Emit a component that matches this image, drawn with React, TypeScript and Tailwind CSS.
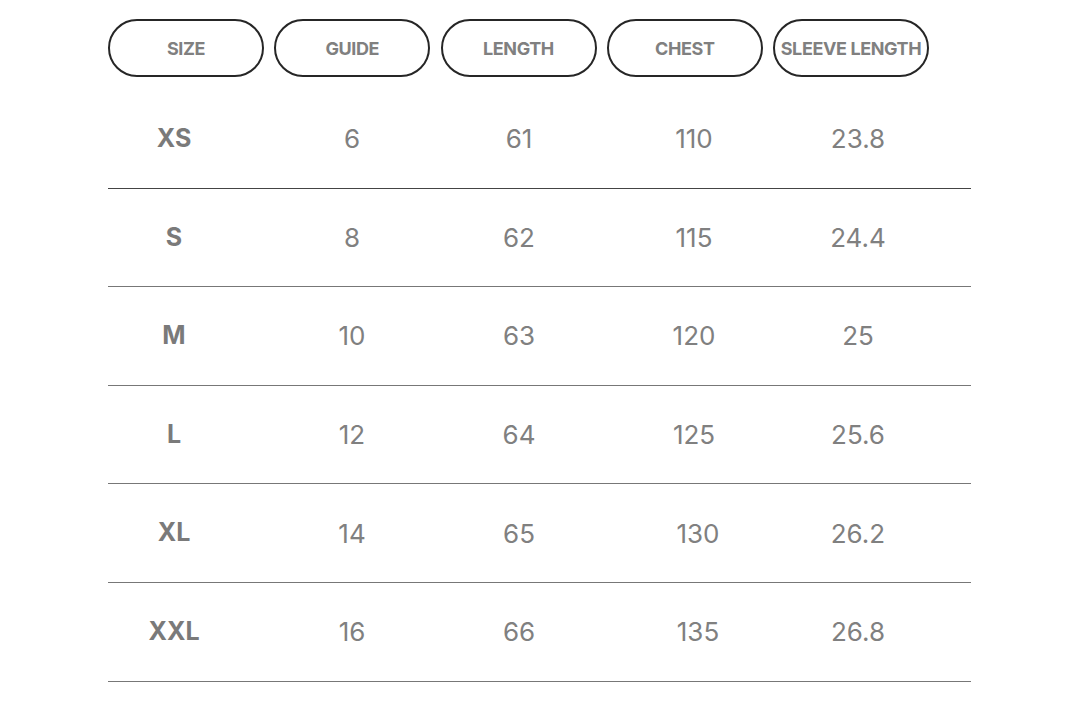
import React from "react";

const headers = ["SIZE", "GUIDE", "LENGTH", "CHEST", "SLEEVE LENGTH"];
const rows = [
  ["XS", "6", "61", "110", "23.8"],
  ["S", "8", "62", "115", "24.4"],
  ["M", "10", "63", "120", "25"],
  ["L", "12", "64", "125", "25.6"],
  ["XL", "14", "65", "130", "26.2"],
  ["XXL", "16", "66", "135", "26.8"],
];
const widths = ["w-[132px]", "w-[224px]", "w-[110px]", "w-[240px]", "w-[88px]"];

export default function App() {
  return (
    <div
      className="w-[1080px] h-[720px] bg-white overflow-hidden"
      style={{ fontFamily: "Inter, 'Liberation Sans', sans-serif" }}
    >
      <div className="pl-[108px] pt-[19px]">
        <div className="flex gap-[10.25px]">
          {headers.map((h) => (
            <div
              key={h}
              className="w-[156px] h-[58px] rounded-full border-2 border-[#262626] flex items-center justify-center text-[18px] font-bold text-[#808080] tracking-[-0.4px] whitespace-nowrap"
            >
              {h}
            </div>
          ))}
        </div>
        <div className="w-[863px] mt-[13px]">
          {rows.map((r, i) => (
            <div
              key={i}
              className={`flex items-center h-[98.6px] border-b-[1.5px] ${i === 0 ? "border-[#444]" : "border-[#777]"}`}
            >
              {r.map((c, j) => (
                <div
                  key={j}
                  className={`${widths[j]} text-center ${j === 0 ? "font-bold text-[#7a7a7a] text-[25px]" : "font-normal text-[#808080] text-[26px]"} ${j === 3 && i >= 4 ? "pl-[8px]" : ""}`}
                >
                  {c}
                </div>
              ))}
            </div>
          ))}
        </div>
      </div>
    </div>
  );
}
